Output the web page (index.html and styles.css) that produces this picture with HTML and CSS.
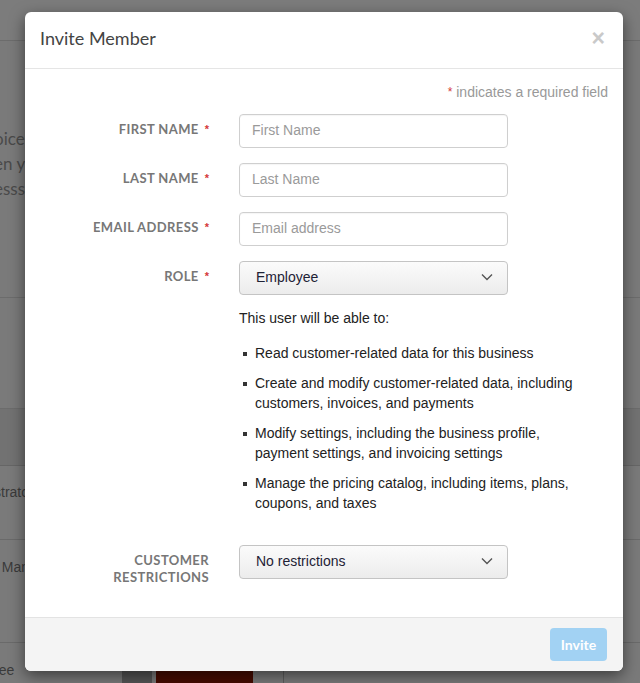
FILE: index.html
```html
<!DOCTYPE html>
<html>
<head>
<meta charset="utf-8">
<link rel="stylesheet" href="styles.css">
</head>
<body>
<div class="page">
  <div class="topbar"></div>
  <div class="intro">
    <p class="intro-text"><span>oice will be sent</span><span>en you send</span><span>esss details</span></p>
  </div>
  <div class="section-gap"></div>
  <div class="table-head"></div>
  <div class="table-row row1"><span>strator</span></div>
  <div class="table-row row2"><span>t Manager</span></div>
  <div class="table-row row3">
    <span class="row3-text">ree</span>
    <span class="btn-dark"></span>
    <span class="btn-red"></span>
    <span class="vline"></span>
  </div>
</div>

<div class="overlay">
  <div class="modal">
    <div class="modal-header">
      <h4 class="modal-title">Invite Member</h4>
      <span class="close">&times;</span>
    </div>
    <div class="modal-body">
      <p class="required-note"><span class="req">*</span> indicates a required field</p>
      <div class="form">
        <label class="label">First Name<span class="req">*</span></label>
        <input class="input" type="text" placeholder="First Name">

        <label class="label">Last Name<span class="req">*</span></label>
        <input class="input" type="text" placeholder="Last Name">

        <label class="label">Email Address<span class="req">*</span></label>
        <input class="input" type="text" placeholder="Email address">

        <label class="label">Role<span class="req">*</span></label>
        <div class="field">
          <div class="select">
            <span>Employee</span>
            <svg class="chev" width="12" height="8" viewBox="0 0 12 8"><path d="M1 1.5 L6 6.5 L11 1.5" fill="none" stroke="#555" stroke-width="1.4"/></svg>
          </div>
          <p class="perm-intro">This user will be able to:</p>
          <ul class="perms">
            <li>Read customer-related data for this business</li>
            <li>Create and modify customer-related data, including customers, invoices, and payments</li>
            <li>Modify settings, including the business profile, payment settings, and invoicing settings</li>
            <li>Manage the pricing catalog, including items, plans, coupons, and taxes</li>
          </ul>
        </div>

        <label class="label label-two">Customer Restrictions</label>
        <div class="select">
          <span>No restrictions</span>
          <svg class="chev" width="12" height="8" viewBox="0 0 12 8"><path d="M1 1.5 L6 6.5 L11 1.5" fill="none" stroke="#555" stroke-width="1.4"/></svg>
        </div>
      </div>
    </div>
    <div class="modal-footer">
      <button class="btn-invite">Invite</button>
    </div>
  </div>
</div>
</body>
</html>
```

FILE: styles.css
```css
* { box-sizing: border-box; }

html, body {
  margin: 0;
  padding: 0;
  height: 683px;
  overflow: hidden;
}

body {
  background: #7a7a7a;
  font-family: "Liberation Sans", Arial, sans-serif;
}

/* background page (behind overlay, already dimmed) */
.page {
  display: flex;
  flex-direction: column;
  width: 640px;
}

.topbar {
  height: 41px;
  border-bottom: 1px solid #6c6c6c;
  background: #7c7c7c;
}

.intro {
  height: 257px;
  border-bottom: 1px solid #6c6c6c;
  padding-top: 85px;
}

.intro-text {
  margin: 0 0 0 -6px;
  display: flex;
  flex-direction: column;
  font-family: Lato, sans-serif;
  font-size: 17px;
  line-height: 25px;
  color: #4a4a4a;
  white-space: nowrap;
}

.section-gap {
  height: 111px;
  border-bottom: 1px solid #6c6c6c;
}

.table-head {
  height: 57px;
  background: #727272;
  border-bottom: 1px solid #666;
}

.table-row {
  display: flex;
  align-items: flex-start;
  border-bottom: 1px solid #6a6a6a;
  font-size: 14px;
  color: #3a3a3a;
  white-space: nowrap;
  margin-left: -6px;
}

.row1 { height: 74px; padding-top: 18px; }
.row2 { height: 103px; padding-top: 19px; }

.row3 {
  height: 60px;
  position: relative;
  border-bottom: none;
}

.row3-text { padding-top: 19px; }

.btn-dark {
  position: absolute;
  left: 128px;
  top: 11px;
  width: 30px;
  height: 40px;
  background: #555;
  border-radius: 3px;
}

.btn-red {
  position: absolute;
  left: 162px;
  top: 11px;
  width: 97px;
  height: 40px;
  background: #470b00;
  border-radius: 4px;
}

.vline {
  position: absolute;
  left: 289px;
  top: 0;
  width: 1px;
  height: 60px;
  background: #5e5e5e;
}

/* modal */
.overlay {
  position: absolute;
  left: 0;
  top: 0;
  width: 640px;
  height: 683px;
}

.modal {
  position: absolute;
  left: 25px;
  top: 12px;
  width: 598px;
  height: 659px;
  background: #fff;
  border-radius: 6px;
  box-shadow: 0 5px 15px rgba(0, 0, 0, 0.5);
  display: flex;
  flex-direction: column;
  overflow: hidden;
}

.modal-header {
  height: 57px;
  border-bottom: 1px solid #e5e5e5;
  display: flex;
  align-items: center;
  justify-content: space-between;
  padding: 0 15px;
}

.modal-title {
  margin: 0;
  font-family: Lato, sans-serif;
  font-weight: 400;
  font-size: 18px;
  color: #444;
  padding-bottom: 4px;
}

.close {
  font-family: "Liberation Sans", Arial, sans-serif;
  font-weight: 700;
  font-size: 23px;
  line-height: 1;
  color: #c9c9c9;
  margin-right: 3px;
  padding-bottom: 4px;
}

.modal-body {
  flex: 1;
  padding: 15px 15px 0 15px;
}

.required-note {
  margin: 0;
  text-align: right;
  font-size: 14px;
  line-height: 17px;
  color: #999;
}

.req {
  color: #d43a3a;
  font-family: "Liberation Sans", Arial, sans-serif;
  font-weight: 700;
  font-size: 11px;
  margin-left: 6px;
  letter-spacing: 0;
  vertical-align: 1px;
}

.required-note .req { margin-left: 0; font-weight: 400; font-size: 12px; vertical-align: 1px; }

.form {
  margin-top: 13px;
  display: grid;
  grid-template-columns: 170px 269px;
  column-gap: 29px;
  row-gap: 15px;
  align-items: start;
}

.label {
  text-align: right;
  font-family: Lato, sans-serif;
  font-weight: 700;
  font-size: 13px;
  letter-spacing: 0.4px;
  line-height: 17px;
  text-transform: uppercase;
  color: #777;
  padding-top: 7px;
  padding-right: 1px;
}

.label-two {
  margin-top: 17px;
  padding-top: 7px;
}

.input {
  height: 34px;
  width: 269px;
  border: 1px solid #cfcfcf;
  border-radius: 4px;
  padding: 0 12px 2px 12px;
  font-family: "Liberation Sans", Arial, sans-serif;
  font-size: 14px;
  color: #333;
  background: #fff;
  box-shadow: inset 0 1px 1px rgba(0, 0, 0, 0.04);
}

.input::placeholder { color: #9a9a9a; }

.field {
  display: flex;
  flex-direction: column;
}

.select {
  height: 34px;
  width: 269px;
  border: 1px solid #c4c4c4;
  border-radius: 4px;
  background: linear-gradient(#fbfbfb, #ececec);
  display: flex;
  align-items: center;
  justify-content: space-between;
  padding: 0 14px 2px 16px;
  font-size: 14px;
  color: #1e2235;
}

.form > .select { margin-top: 17px; }

.perm-intro {
  margin: 13px 0 15px 0;
  font-size: 14px;
  line-height: 20px;
  color: #222;
  white-space: nowrap;
}

.perms {
  list-style: none;
  margin: 0;
  padding: 0;
  width: 345px;
  display: flex;
  flex-direction: column;
  gap: 10px;
}

.perms li {
  position: relative;
  padding-left: 16px;
  font-size: 14px;
  line-height: 20px;
  color: #222;
}

.perms li::before {
  content: "";
  position: absolute;
  left: 4px;
  top: 9px;
  width: 4px;
  height: 4px;
  background: #333;
}

.modal-footer {
  height: 54px;
  border-top: 1px solid #e3e3e3;
  background: #f4f4f4;
  display: flex;
  justify-content: flex-end;
  align-items: flex-start;
  padding: 10px 16px 0 15px;
}

.btn-invite {
  height: 33px;
  width: 57px;
  border: none;
  border-radius: 4px;
  background: #a2d2f3;
  color: #fff;
  font-family: Lato, sans-serif;
  font-weight: 700;
  font-size: 14px;
  padding: 0;
}
```
